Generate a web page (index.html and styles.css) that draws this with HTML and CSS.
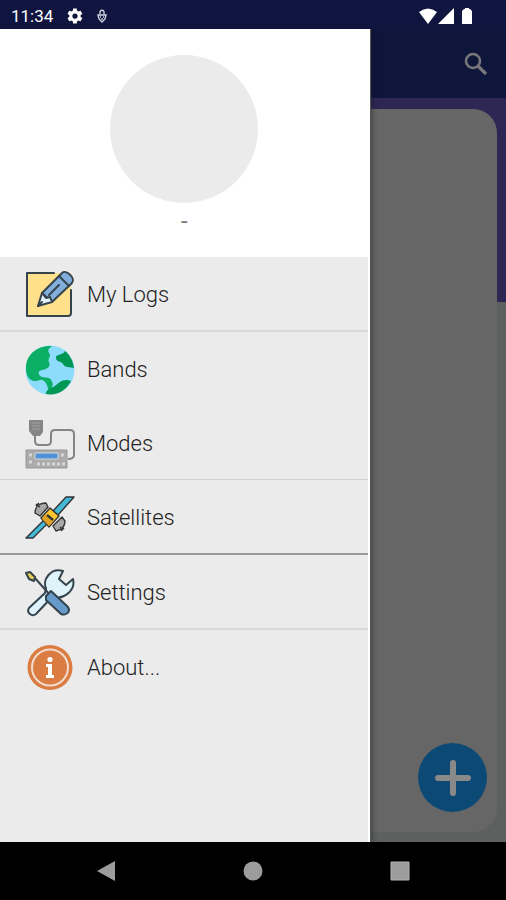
FILE: index.html
```html
<!DOCTYPE html>
<html lang="en">
<head>
<meta charset="utf-8">
<meta name="viewport" content="width=device-width, initial-scale=1">
<title>Logbook</title>
<link rel="stylesheet" href="styles.css">
</head>
<body>
<div class="status">
  <span class="clock">11:34</span>
  <svg class="gear" viewBox="0 0 24 24" width="18" height="18"><path fill="#fff" fill-rule="evenodd" d="M19.4 13c0-.3.1-.6.1-1s0-.7-.1-1l2.100-1.600c.2-.2.2-.4.1-.6l-2-3.500c-.1-.2-.4-.3-.6-.2l-2.500 1c-.5-.4-1.100-.7-1.700-1l-.4-2.600c0-.3-.2-.5-.5-.5h-4c-.3 0-.5.2-.5.5L9 5.100c-.6.3-1.200.6-1.700 1l-2.500-1c-.2-.1-.5 0-.6.2l-2 3.500c-.1.2 0 .4.1.6L4.500 11c0 .3-.1.7-.1 1s0 .7.1 1l-2.200 1.600c-.1.200-.2.400-.1.600l2 3.500c.1.200.4.300.6.200l2.500-1c.5.400 1.100.7 1.700 1l.4 2.600c0 .300.2.500.5.500h4c.3 0 .5-.2.5-.5l.4-2.600c.6-.3 1.200-.6 1.700-1l2.500 1c.2.100.5 0 .6-.2l2-3.500c.1-.2 0-.4-.1-.6zM12 15.500a3.500 3.500 0 1 1 0-7 3.500 3.500 0 0 1 0 7z"/></svg>
  <svg class="debug" viewBox="0 0 10 14" width="10" height="14"><path d="M3 5c-1-5 5-5 4 0" fill="none" stroke="#d5d6e2" stroke-width="1.400"/><path d="M1 6h8l-1 4-3 3-3-3z" fill="none" stroke="#d5d6e2" stroke-width="1.400"/><path d="M3 8h1M6 8h1M5 9v2" stroke="#d5d6e2" stroke-width="1.300"/></svg>
  <svg class="signals" viewBox="0 0 54 18" width="54" height="18" fill="#fff"><path d="M0 5Q9-2 18 5L9 17zM19 17L35 1v16zM43 4l2-2h1V1h4v1h1l2 2v13H43z"/></svg>
</div>
<div class="stage">
  <main class="page">
    <header class="appbar">
      <button class="search" type="button" aria-label="Search"><svg viewBox="0 0 24 24" width="24" height="24" fill="none" stroke="#777779"><circle cx="9" cy="9" r="7" stroke-width="2.600"/><path d="M14 14l8 8" stroke-width="3.200"/></svg></button>
    </header>
    <section class="content">
      <div class="card">
        <button class="add" type="button" aria-label="Add log"><svg viewBox="0 0 36 36" width="36" height="36" stroke="#898989" stroke-width="6" stroke-linecap="round"><path d="M18 3v30M3 18h30"/></svg></button>
      </div>
    </section>
  </main>
  <aside class="drawer">
    <div class="profile">
      <div class="avatar"></div>
      <p class="callsign">-</p>
    </div>
    <nav class="menu">
      <a class="item ruled" href="#logs">
        <svg viewBox="0 0 50 50" width="50" height="50" stroke="#35434d" stroke-width="2" stroke-linejoin="round" stroke-linecap="round"><path fill="#ffe08b" stroke="none" d="M2 3h44v40l-4 4H2z"/><path fill="none" d="M29 3H2v43h41q3 0 3-3V20"/><path fill="#82aedb" d="M17 23L37 3c4-4 14 5 10 10L27 32z"/><path fill="#e1f2fb" d="M17 23l-4 13 14-4-2-5-4 1z"/><path d="M13 36l4-4M34 6l10 10M24 25l10-10" fill="none"/></svg>
        <span>My Logs</span>
      </a>
      <a class="item" href="#bands">
        <svg viewBox="0 0 50 50" width="50" height="50"><circle cx="25" cy="25" r="24.500" fill="#8edcfb"/><path fill="#0aae65" d="M27 1C13 0 1 9 1 23c0 8 3 12 8 13 4 1 7-3 10 0 4 3 3 8 6 10l2-1c-1-3 2-5 0-8-1-5-5-4-10-5-4-2-5-6 0-7 6-1 9-4 7-8-2-4 3-5 0-9-2-4 1-5 3-7z"/><path fill="#009754" d="M40 6c-1 4-10 3-9 7 0 4 5 3 7 6 2 4 7 3 11 4-1-7-4-13-9-17zM46 36c-8-3-11 1-15 4-4 4-10 3-10 9 10 2 20-3 25-13z"/></svg>
        <span>Bands</span>
      </a>
      <a class="item thin" href="#modes">
        <svg viewBox="0 0 50 50" width="50" height="50"><path fill="#858585" d="M4 1h14v12l-3 4H8l-4-5z"/><path d="M7 4h8M7 7h8M7 10h8" stroke="#a1a1a1" fill="none"/><path fill="none" stroke="#858585" stroke-width="2" d="M10 17v5q0 4 4 4h8q4 0 4-4v-7q0-4 4-4h15q4 0 4 4v21q0 4-6 4"/><path fill="#ababab" stroke="#989898" d="M1 31h41v18H1z"/><path fill="#4f93d7" stroke="#d7d7d7" d="M10 34h23v6H10z"/><path stroke="#d7d7d7" stroke-width="3" stroke-dasharray="3 2" d="M4 36h3M36 36h3M4 43h3M12 45h28"/></svg>
        <span>Modes</span>
      </a>
      <a class="item ruled dark" href="#satellites">
        <svg viewBox="0 0 50 50" width="50" height="50" stroke="#333" stroke-width="1.400" stroke-linejoin="round"><path fill="#43b9d5" d="M1 45l18-18 4 3L8 45zM28 18L41 4h8L33 22z"/><path fill="#ffc52e" d="M16 25l9-10 9 8-10 11z"/><path fill="#e0a226" stroke="none" d="M17 26l3-4 8 7-4 4z"/><path d="M22 22l6 5" fill="none" stroke-width="2.500"/><path fill="#a7a7a7" d="M10 20c0-6 4-10 11-10l2 4-8 9zM28 33l9-9 3 4c0 6-4 9-9 10z"/><path fill="none" d="M15 14l-4-3M11 13l3-3M35 34l3 3M36 38l3-3"/></svg>
        <span>Satellites</span>
      </a>
      <a class="item ruled" href="#settings">
        <svg viewBox="0 0 50 50" width="50" height="50" stroke="#35434d" stroke-width="2" stroke-linejoin="round" stroke-linecap="round"><path fill="#dff3fb" d="M20 25L4 40c-3 5 3 9 7 6l16-17c11 3 24-6 21-18l-7 6-7-6 4-8C26-1 17 12 21 20z"/><path fill="none" d="M9 9l17 19"/><path fill="#e6cc59" d="M1 5l4-1 5 5-1 4-5-2z"/><path fill="#669ac8" d="M21 28l5-5 17 16c3 5-2 9-7 7L21 32z"/></svg>
        <span>Settings</span>
      </a>
      <a class="item" href="#about">
        <svg viewBox="0 0 50 50" width="50" height="50"><circle cx="25" cy="24.500" r="22.500" fill="#db7c43"/><circle cx="25" cy="24.500" r="18" fill="none" stroke="#f3ddce" stroke-width="2"/><circle cx="25" cy="16.500" r="2.600" fill="#fff"/><path fill="#fff" d="M21 21h6v11h2v3h-8v-3h2v-8h-2z"/></svg>
        <span>About...</span>
      </a>
    </nav>
  </aside>
</div>
<footer class="sysnav">
  <button type="button" aria-label="Back"><svg viewBox="0 0 20 22" width="20" height="22"><path fill="#9c9c9c" d="M1 11L19 1v20z"/></svg></button>
  <button type="button" aria-label="Home"><svg viewBox="0 0 20 20" width="20" height="20"><circle cx="10" cy="10" r="9.500" fill="#9c9c9c"/></svg></button>
  <button type="button" aria-label="Recent apps"><svg viewBox="0 0 20 20" width="20" height="20"><path fill="#9c9c9c" stroke="#b5b5b5" d="M1 1h18v18H1z"/></svg></button>
</footer>
</body>
</html>
```
FILE: styles.css
```css
* { box-sizing: border-box; }

body {
  margin: 0;
  min-height: 100vh;
  display: flex;
  flex-direction: column;
  background: #000;
  font-family: Roboto, "Liberation Sans", sans-serif;
}

button {
  display: grid;
  place-items: center;
  padding: 0;
  border: 0;
  background: none;
}

svg { display: block; flex: none; }

.status {
  display: flex;
  align-items: center;
  height: 29px;
  padding: 2px 33px 0 11px;
  background: #10153f;
  color: #fff;
}
.clock { font-size: 17px; line-height: 24px; }
.gear { margin-left: 13px; }
.debug { margin-left: 13px; }
.signals { margin-left: auto; }

.stage {
  flex: 1;
  display: grid;
  grid-template-columns: 73.200% 1fr;
}

.page {
  grid-area: 1 / 1 / 2 / 3;
  display: flex;
  flex-direction: column;
}
.appbar {
  display: flex;
  align-items: center;
  justify-content: flex-end;
  height: 69px;
  padding: 0 18px;
  background: #0f163c;
}
.content {
  flex: 1;
  display: flex;
  padding: 11px 9px 10px;
  background: linear-gradient(#2e2753 204px, #5c6160 204px);
}
.card {
  flex: 1;
  display: flex;
  align-items: flex-end;
  justify-content: flex-end;
  padding: 20px 10px;
  border-radius: 24px;
  background: #666;
}
.add {
  width: 69px;
  height: 69px;
  border-radius: 50%;
  background: #0c4974;
}

.drawer {
  grid-area: 1 / 1;
  z-index: 1;
  display: flex;
  flex-direction: column;
  border-right: 2px solid #fff;
  background: #ebebeb;
  box-shadow: 1px 0 1px #555, 2px 0 6px #0006;
  clip-path: inset(0 -12px 0 0);
}
.profile {
  display: flex;
  flex-direction: column;
  align-items: center;
  height: 228px;
  padding-top: 26px;
  background: #fff;
}
.avatar {
  width: 148px;
  height: 148px;
  border-radius: 50%;
  background: #ebebeb;
}
.callsign {
  margin: 6px 0 0;
  color: #777;
  font-size: 24px;
  line-height: 24px;
}
.item {
  display: flex;
  align-items: center;
  gap: 12px;
  height: 74px;
  padding: 2px 0 0 25px;
  color: #222;
  font-size: 22px;
  font-weight: 300;
  line-height: 28px;
  text-decoration: none;
}
.ruled { height: 75px; border-bottom: 2px solid #d8d8d8; }
.thin { border-bottom: 1px solid #d3d3d3; }
.dark { border-color: #999; }

.sysnav {
  display: flex;
  align-items: center;
  justify-content: center;
  height: 58px;
}
.sysnav button { width: 29%; height: 48px; }
```
